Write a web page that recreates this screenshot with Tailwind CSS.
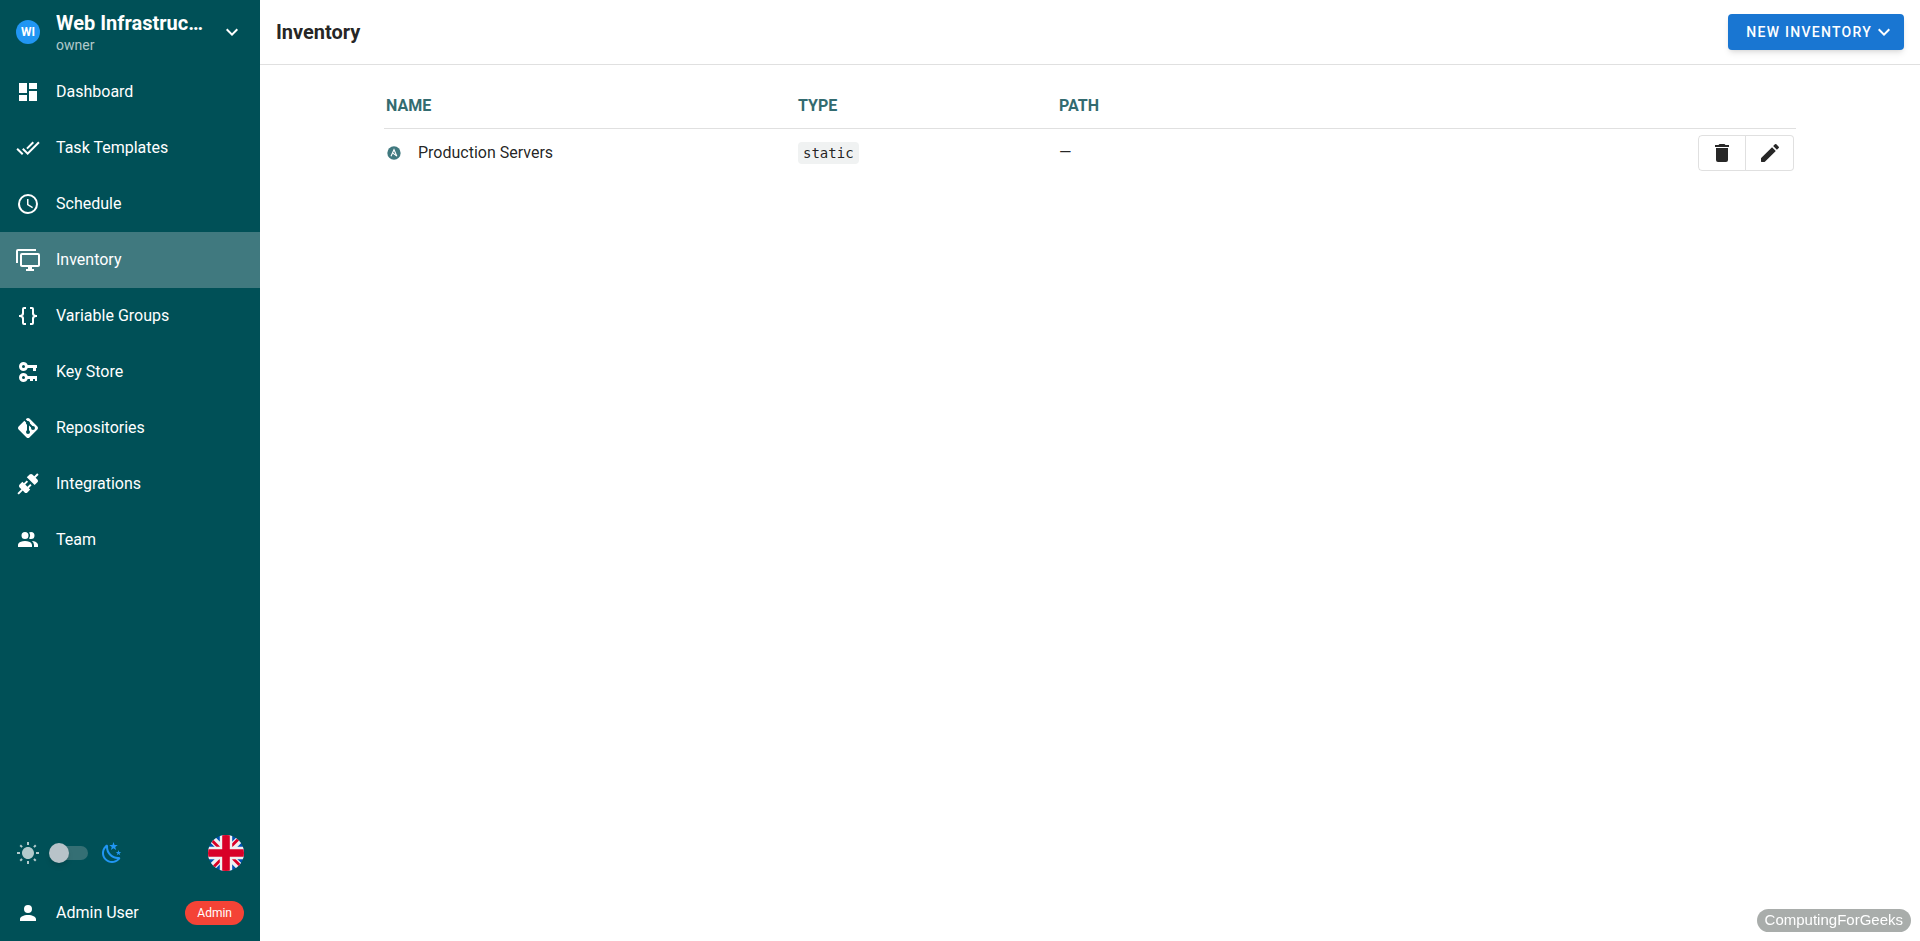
<!DOCTYPE html>
<html lang="en">
<head>
  <meta charset="UTF-8" />
  <meta name="viewport" content="width=device-width, initial-scale=1.0" />
  <title>Inventory - Semaphore</title>
  <script src="https://cdn.jsdelivr.net/npm/@tailwindcss/browser@4"></script>
</head>

<body class="flex min-h-screen bg-white font-['Roboto',sans-serif] text-base text-black/87">

  <!-- SIDEBAR -->
  <aside class="sticky top-0 flex h-screen w-65 shrink-0 flex-col bg-[#005057] text-white">
    <button type="button" class="flex h-16 items-center px-4 text-left">
      <span class="flex size-6 shrink-0 items-center justify-center rounded-full bg-[#2196f3] text-xs font-bold">WI</span>
      <span class="ml-4 min-w-0 flex-1 pt-[2px]">
        <span class="block truncate text-xl leading-6 font-bold">Web Infrastructure</span>
        <span class="block text-sm leading-5 text-white/70">owner</span>
      </span>
      <svg class="ml-4 size-6 shrink-0 fill-current" viewBox="0 0 24 24"><path d="M7.41,8.58L12,13.17L16.59,8.58L18,10L12,16L6,10L7.41,8.58Z" /></svg>
    </button>

    <nav>
      <a href="#dashboard" class="flex h-14 items-center gap-4 px-4 hover:bg-white/10">
        <svg class="size-6 fill-current" viewBox="0 0 24 24"><path d="M13,3V9H21V3M13,21H21V11H13M3,21H11V15H3M3,13H11V3H3V13Z" /></svg>
        Dashboard
      </a>
      <a href="#templates" class="flex h-14 items-center gap-4 px-4 hover:bg-white/10">
        <svg class="size-6 fill-current" viewBox="0 0 24 24"><path d="M0.41,13.41L6,19L7.41,17.58L1.83,12M22.24,5.58L11.66,16.17L7.5,12L6.07,13.41L11.66,19L23.66,7M18,7L16.59,5.58L10.24,11.93L11.66,13.34L18,7Z" /></svg>
        Task Templates
      </a>
      <a href="#schedule" class="flex h-14 items-center gap-4 px-4 hover:bg-white/10">
        <svg class="size-6 fill-current" viewBox="0 0 24 24"><path d="M12,20A8,8 0 0,0 20,12A8,8 0 0,0 12,4A8,8 0 0,0 4,12A8,8 0 0,0 12,20M12,2A10,10 0 0,1 22,12A10,10 0 0,1 12,22C6.47,22 2,17.5 2,12A10,10 0 0,1 12,2M12.5,7V12.25L17,14.92L16.25,16.15L11,13V7H12.5Z" /></svg>
        Schedule
      </a>
      <a href="#inventory" aria-current="page" class="flex h-14 items-center gap-4 bg-[#40797f] px-4">
        <svg class="size-6 fill-current" viewBox="0 0 24 24"><path d="M22,17V7H6V17H22M22,5A2,2 0 0,1 24,7V17C24,18.11 23.1,19 22,19H16V21H18V23H10V21H12V19H6C4.89,19 4,18.11 4,17V7A2,2 0 0,1 6,5H22M2,3V15H0V3A2,2 0 0,1 2,1H20V3H2Z" /></svg>
        Inventory
      </a>
      <a href="#environment" class="flex h-14 items-center gap-4 px-4 hover:bg-white/10">
        <svg class="size-6 fill-current" viewBox="0 0 24 24"><path d="M8,3A2,2 0 0,0 6,5V9A2,2 0 0,1 4,11H3V13H4A2,2 0 0,1 6,15V19A2,2 0 0,0 8,21H10V19H8V14A2,2 0 0,0 6,12A2,2 0 0,0 8,10V5H10V3M16,3A2,2 0 0,1 18,5V9A2,2 0 0,0 20,11H21V13H20A2,2 0 0,0 18,15V19A2,2 0 0,1 16,21H14V19H16V14A2,2 0 0,1 18,12A2,2 0 0,1 16,10V5H14V3H16Z" /></svg>
        Variable Groups
      </a>
      <a href="#keys" class="flex h-14 items-center gap-4 px-4 hover:bg-white/10">
        <svg class="size-6 fill-current" viewBox="0 0 24 24"><path fill-rule="evenodd" d="M7.5,2C9.4,2 11.1,3.2 11.7,5H21V8H20V11H17V8H11.7C11.1,9.8 9.4,11 7.5,11A4.5,4.5 0 0,1 7.5,2ZM7.5,5A1.5,1.5 0 1,0 7.5,8A1.5,1.5 0 1,0 7.5,5ZM7.5,13C9.4,13 11.1,14.2 11.7,16H21V21H19V19H17V21H14V19H11.7C11.1,20.8 9.4,22 7.5,22A4.5,4.5 0 0,1 7.5,13ZM7.5,16A1.5,1.5 0 1,0 7.5,19A1.5,1.5 0 1,0 7.5,16Z" /></svg>
        Key Store
      </a>
      <a href="#repositories" class="flex h-14 items-center gap-4 px-4 hover:bg-white/10">
        <svg class="size-6 fill-current" viewBox="0 0 24 24"><path d="M2.6,10.59L8.38,4.8L10.07,6.5C9.83,7.35 10.22,8.28 11,8.73V14.27C10.4,14.61 10,15.26 10,16A2,2 0 0,0 12,18A2,2 0 0,0 14,16C14,15.26 13.6,14.61 13,14.27V9.41L15.07,11.5C15,11.65 15,11.82 15,12A2,2 0 0,0 17,14A2,2 0 0,0 19,12A2,2 0 0,0 17,10C16.82,10 16.65,10 16.5,10.07L13.93,7.5C14.19,6.57 13.71,5.55 12.78,5.16C12.35,5 11.9,4.96 11.5,5.07L9.8,3.38L10.59,2.6C11.37,1.81 12.63,1.81 13.41,2.6L21.4,10.59C22.19,11.37 22.19,12.63 21.4,13.41L13.41,21.4C12.63,22.19 11.37,22.19 10.59,21.4L2.6,13.41C1.81,12.63 1.81,11.37 2.6,10.59Z" /></svg>
        Repositories
      </a>
      <a href="#integrations" class="flex h-14 items-center gap-4 px-4 hover:bg-white/10">
        <svg class="size-6 fill-current" viewBox="0 0 24 24"><path d="M21.4 7.5C22.2 8.3 22.2 9.6 21.4 10.3L18.6 13.1L10.8 5.3L13.6 2.5C14.4 1.7 15.7 1.7 16.4 2.5L18.2 4.3L21.2 1.3L22.6 2.7L19.6 5.7L21.4 7.5M15.6 13.3L14.2 11.9L11.4 14.7L9.3 12.6L12.1 9.8L10.7 8.4L7.9 11.2L6.4 9.8L3.6 12.6C2.8 13.4 2.8 14.7 3.6 15.4L5.4 17.2L1.4 21.2L2.8 22.6L6.8 18.6L8.6 20.4C9.4 21.2 10.7 21.2 11.4 20.4L14.2 17.6L12.8 16.2L15.6 13.3Z" /></svg>
        Integrations
      </a>
      <a href="#team" class="flex h-14 items-center gap-4 px-4 hover:bg-white/10">
        <svg class="size-6 fill-current" viewBox="0 0 24 24"><path d="M16 17V19H2V17S2 13 9 13 16 17 16 17M12.5 7.5A3.5 3.5 0 1 0 9 11A3.5 3.5 0 0 0 12.5 7.5M15.94 13A5.32 5.32 0 0 1 18 17V19H22V17S22 13.37 15.94 13M15 4A3.39 3.39 0 0 0 13.07 4.59A5 5 0 0 1 13.07 10.41A3.39 3.39 0 0 0 15 11A3.5 3.5 0 0 0 15 4Z" /></svg>
        Team
      </a>
    </nav>

    <div class="mt-auto">
      <!-- theme + language -->
      <div class="flex h-16 items-center px-4">
        <svg class="size-6 fill-[#b3cacc]" viewBox="0 0 24 24"><path d="M3.55 19.09L4.96 20.5L6.76 18.71L5.34 17.29M12 6C8.69 6 6 8.69 6 12S8.69 18 12 18 18 15.31 18 12C18 8.68 15.31 6 12 6M20 13H23V11H20M17.24 18.71L19.04 20.5L20.45 19.09L18.66 17.29M20.45 5L19.04 3.6L17.24 5.39L18.66 6.81M13 1H11V4H13M6.76 5.39L4.96 3.6L3.55 5L5.34 6.81L6.76 5.39M1 13H4V11H1M13 20H11V23H13" /></svg>
        <label class="relative ml-2 flex h-6 w-10 cursor-pointer items-center">
          <input type="checkbox" aria-label="Dark mode" class="peer ml-1 h-[14px] w-9 appearance-none rounded-full bg-[#356f74]" />
          <span class="absolute left-px size-5 rounded-full bg-[#b8c3c9] shadow-md peer-checked:left-5"></span>
        </label>
        <svg class="ml-3 size-6 fill-[#2196f3]" viewBox="0 0 24 24"><path d="M17.75,4.09L15.22,6.03L16.13,9.09L13.5,7.28L10.87,9.09L11.78,6.03L9.25,4.09L12.44,4L13.5,1L14.56,4L17.75,4.09M21.25,11L19.61,12.25L20.2,14.23L18.5,13.06L16.8,14.23L17.39,12.25L15.75,11L17.81,10.95L18.5,9L19.19,10.95L21.25,11M18.97,15.95C19.8,15.87 20.69,17.05 20.16,17.8C19.84,18.25 19.5,18.67 19.08,19.07C15.17,23 8.84,23 4.94,19.07C1.03,15.17 1.03,8.83 4.94,4.93C5.34,4.53 5.76,4.17 6.21,3.85C6.96,3.32 8.14,4.21 8.06,5.04C7.79,7.9 8.75,10.87 10.95,13.06C13.14,15.26 16.1,16.22 18.97,15.95M17.33,17.97C14.5,17.81 11.7,16.64 9.53,14.5C7.36,12.31 6.2,9.5 6.04,6.68C3.23,9.82 3.34,14.64 6.35,17.66C9.37,20.67 14.19,20.78 17.33,17.97Z" /></svg>
        <button type="button" aria-label="Language: English" class="ml-auto size-9 overflow-hidden rounded-full">
          <svg class="size-9" viewBox="0 0 512 512" fill="none">
            <rect width="512" height="512" fill="#0052b4" />
            <path stroke="#f0f0f0" stroke-width="104" d="M0 0L512 512M512 0L0 512" />
            <path stroke="#d80027" stroke-width="40" d="M0 22L256 278M0 534L256 278M512 -22L256 234M512 490L256 234" />
            <path stroke="#f0f0f0" stroke-width="176" d="M256 0V512M0 256H512" />
            <path stroke="#d80027" stroke-width="108" d="M256 0V512M0 256H512" />
          </svg>
        </button>
      </div>

      <!-- current user -->
      <button type="button" class="flex h-14 w-full items-center gap-4 px-4 text-left">
        <svg class="size-6 fill-current" viewBox="0 0 24 24"><path d="M12,4A4,4 0 0,1 16,8A4,4 0 0,1 12,12A4,4 0 0,1 8,8A4,4 0 0,1 12,4M12,14C16.42,14 20,15.79 20,18V20H4V18C4,15.79 7.58,14 12,14Z" /></svg>
        Admin User
        <span class="ml-auto flex h-6 items-center rounded-full bg-[#f44336] px-3 text-xs">Admin</span>
      </button>
    </div>
  </aside>

  <!-- CONTENT -->
  <div class="min-w-0 flex-1">
    <header class="flex h-[65px] items-center justify-between border-b border-black/12 px-4">
      <h1 class="text-xl font-bold">Inventory</h1>
      <button type="button" class="flex h-9 items-center rounded bg-[#1976d2] pr-2 pl-[18px] text-sm font-medium tracking-[0.09em] text-white uppercase shadow-md hover:bg-blue-700">
        New Inventory
        <svg class="size-6 fill-current" viewBox="0 0 24 24"><path d="M7.41,8.58L12,13.17L16.59,8.58L18,10L12,16L6,10L7.41,8.58Z" /></svg>
      </button>
    </header>

    <main class="px-31 pt-[15px]">
      <table class="w-full table-fixed text-left">
        <thead>
          <tr class="h-12 border-b border-black/12 text-[#336b70] uppercase">
            <th class="w-[412px] px-[2px] pt-1 font-bold">Name</th>
            <th class="w-[261px] px-[2px] pt-1 font-bold">Type</th>
            <th class="px-[2px] pt-1 font-bold">Path</th>
            <th class="w-30" aria-label="Actions"></th>
          </tr>
        </thead>
        <tbody>
          <tr class="h-[50px]">
            <td class="px-[2px]">
              <a href="#inventory-1" class="flex items-center">
                <svg class="mr-4 size-4" viewBox="0 0 24 24">
                  <circle cx="12" cy="12" r="10" fill="#40797f" />
                  <path fill="none" stroke="#fff" stroke-width="1.6" d="M7.5,17L12,7L16.3,16.8L9.8,11.8" />
                </svg>
                Production Servers
              </a>
            </td>
            <td class="px-[2px]"><code class="rounded bg-[#f0f2f2] px-[5px] py-[3px] font-['DejaVu_Sans_Mono',monospace] text-sm">static</code></td>
            <td class="px-[2px]">&mdash;</td>
            <td class="px-[2px]">
              <div class="flex justify-end">
                <button type="button" aria-label="Delete" class="flex h-9 w-12 items-center justify-center rounded-l border border-black/12 hover:bg-gray-100">
                  <svg class="size-6 fill-[#272727]" viewBox="0 0 24 24"><path d="M19,4H15.5L14.5,3H9.5L8.5,4H5V6H19M6,19A2,2 0 0,0 8,21H16A2,2 0 0,0 18,19V7H6V19Z" /></svg>
                </button>
                <button type="button" aria-label="Edit" class="flex h-9 w-12 items-center justify-center rounded-r border border-l-0 border-black/12 hover:bg-gray-100">
                  <svg class="size-6 fill-[#272727]" viewBox="0 0 24 24"><path d="M3 17.46v3.04c0 .28.22.5.5.5h3.04c.13 0 .26-.05.35-.15L17.81 9.94l-3.75-3.75L3.15 17.1c-.1.1-.15.22-.15.36zM20.71 7.04a1 1 0 0 0 0-1.41l-2.34-2.34a1 1 0 0 0-1.41 0l-1.83 1.83 3.75 3.75z" /></svg>
                </button>
              </div>
            </td>
          </tr>
        </tbody>
      </table>
    </main>
  </div>

  <!-- watermark -->
  <div class="fixed right-[9px] bottom-[9px] flex h-[23px] items-center rounded-full bg-[#a9adab] px-2 font-['Liberation_Sans',sans-serif] text-[15px] text-white">ComputingForGeeks</div>
</body>
</html>
